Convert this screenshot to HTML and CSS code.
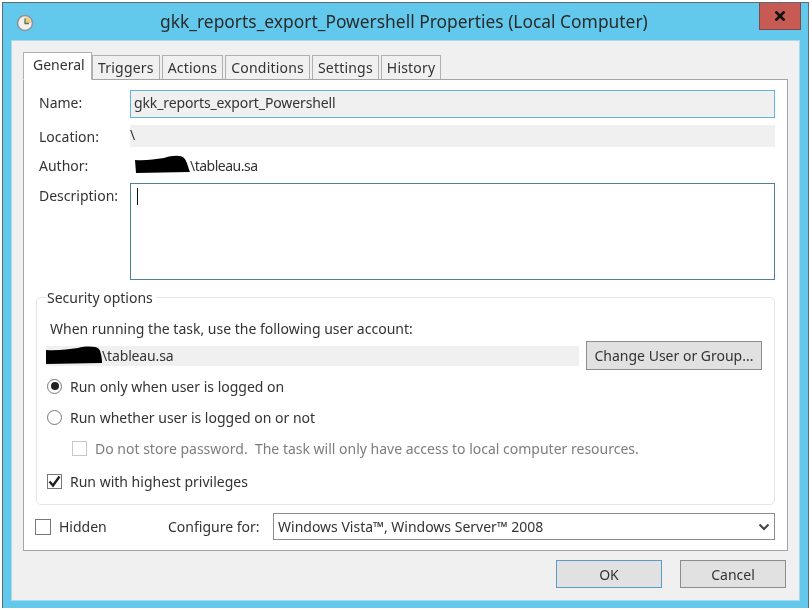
FILE: index.html
```html
<!DOCTYPE html>
<html lang="en">
<head>
    <meta charset="UTF-8">
    <meta name="viewport" content="width=device-width, initial-scale=1.0">
    <title>gkk_reports_export_Powershell Properties (Local Computer)</title>
    <link rel="stylesheet" href="styles.css">
</head>
<body>
    <div class="window">
        <div class="titlebar">
            <svg class="clock" width="18" height="18" viewBox="0 0 18 18">
                <circle cx="9" cy="9" r="7.5" fill="#f2f0ea" stroke="#8d939a" stroke-width="1.6"/>
                <path d="M9 9V3A6 6 0 0 1 15 9Z" fill="#eccb7c"/>
                <path d="M9 4.5V9.5H13" fill="none" stroke="#6d6a5e" stroke-width="1.3"/>
            </svg>
            <div class="title">gkk_reports_export_Powershell Properties (Local Computer)</div>
            <button class="close">
                <svg width="12" height="10" viewBox="0 0 12 10"><path d="M1.5 0.5L10.5 9.5M10.5 0.5L1.5 9.5" stroke="#111" stroke-width="2.6"/></svg>
            </button>
        </div>
        <div class="content">
            <div class="tabs">
                <div class="tab active">General</div>
                <div class="tab">Triggers</div>
                <div class="tab">Actions</div>
                <div class="tab">Conditions</div>
                <div class="tab">Settings</div>
                <div class="tab">History</div>
            </div>
            <div class="panel">
                <div class="row row-name">
                    <label class="row-label">Name:</label>
                    <div class="name-input">gkk_reports_export_Powershell</div>
                </div>
                <div class="row row-location">
                    <label class="row-label">Location:</label>
                    <div class="readonly">\</div>
                </div>
                <div class="row row-author">
                    <label class="row-label">Author:</label>
                    <div class="author">
                        <svg class="blot" width="56" height="18" viewBox="0 0 56 18"><path d="M1 5C12 6 20 4 30 3C38 0 48 0 50 3C53 6 54 12 56 17L2 18Z" fill="#000"/></svg>\tableau.sa
                    </div>
                </div>
                <div class="row row-desc">
                    <label class="row-label">Description:</label>
                    <div class="desc"><span class="caret"></span></div>
                </div>
                <fieldset class="security">
                    <legend>Security options</legend>
                    <p class="account-note">When running the task, use the following user account:</p>
                    <div class="account-row">
                        <div class="account">
                            <svg class="blot" width="56" height="18" viewBox="0 0 56 18"><path d="M0 4C12 5 22 3 32 2C40 0 50 0 53 3C55 6 56 12 56 17L0 18Z" fill="#000"/></svg>\tableau.sa
                        </div>
                        <button class="btn btn-change">Change User or Group...</button>
                    </div>
                    <div class="option opt-first"><span class="radio checked"></span>Run only when user is logged on</div>
                    <div class="option opt-second"><span class="radio"></span>Run whether user is logged on or not</div>
                    <div class="option option-sub disabled"><span class="check"></span>Do not store password.&nbsp; The task will only have access to local computer resources.</div>
                    <div class="option opt-last">
                        <span class="check">
                            <svg width="13" height="13" viewBox="0 0 13 13"><path d="M1.5 6.5L5 10.5L11.5 1.5" fill="none" stroke="#222" stroke-width="2.4"/></svg>
                        </span>Run with highest privileges
                    </div>
                </fieldset>
                <div class="bottom-row">
                    <div class="hidden-opt"><span class="check"></span>Hidden</div>
                    <label class="config-label">Configure for:</label>
                    <div class="select">
                        <span>Windows Vista™, Windows Server™ 2008</span>
                        <svg width="12" height="8" viewBox="0 0 12 8"><path d="M1.5 1.5L6 6L10.5 1.5" fill="none" stroke="#444" stroke-width="2"/></svg>
                    </div>
                </div>
            </div>
            <div class="actions">
                <button class="btn btn-wide btn-default">OK</button>
                <button class="btn btn-wide">Cancel</button>
            </div>
        </div>
    </div>
</body>
</html>
```

FILE: styles.css
```css
* {
    box-sizing: border-box;
}
body {
    margin: 0;
    padding: 2px 3px 0 2px;
    background-color: #fff;
    font-family: "Noto Sans", sans-serif;
    font-size: 14px;
    color: #333;
}
/* the reference is a slightly soft, rescaled screenshot */
.window {
    position: relative;
    height: 606px;
    background: #63c9ec;
    border: 1px solid #5f6b72;
    border-bottom: none;
    padding: 0 8px 7px 8px;
    display: flex;
    flex-direction: column;
    filter: blur(0.35px);
}
.titlebar {
    height: 37px;
    flex: none;
    display: flex;
    align-items: center;
}
.clock {
    margin-left: 5px;
    margin-top: 3px;
}
.title {
    margin-left: 126px;
    margin-top: -2px;
    font-size: 17.4px;
    color: #2a2a2a;
}
.close {
    position: absolute;
    top: 0;
    right: 7px;
    width: 42px;
    height: 27px;
    padding: 0;
    background: #c75a52;
    border: 1px solid #7e4a48;
    border-top: none;
    display: flex;
    align-items: center;
    justify-content: center;
}
.content {
    flex: 1;
    background: #f0f0f0;
    border: 1px solid #a9d8ea;
    padding: 11px 11px 0 11px;
}
.tabs {
    display: flex;
    align-items: flex-end;
    gap: 2px;
    height: 28px;
    position: relative;
    z-index: 1;
}
.tab {
    height: 24px;
    padding: 0 5px;
    margin-bottom: 1px;
    line-height: 24px;
    background: #f0f0f0;
    border: 1px solid #aeb0b2;
    border-bottom: none;
    font-size: 14px;
    letter-spacing: 0.2px;
}
.tab.active {
    height: 28px;
    margin-bottom: 0;
    margin-right: -2px;
    width: 69px;
    padding: 0 9px;
    line-height: 24px;
    background: #fff;
    border-bottom: 1px solid #fff;
    letter-spacing: 0;
}
.panel {
    height: 472px;
    margin-top: -1px;
    background: #fff;
    border: 1px solid #a2a4a6;
    padding: 10px 12px 0 15px;
}
.row {
    display: flex;
}
.row-label {
    width: 91px;
    flex: none;
}
.row-name {
    align-items: center;
}
.row-name .row-label {
    padding-bottom: 3px;
}
.name-input {
    flex: 1;
    height: 28px;
    line-height: 24px;
    padding-left: 3px;
    letter-spacing: -0.12px;
    background: #f0f0f0;
    border: 1px solid #63b4dc;
}
.row-location {
    margin-top: 7px;
    height: 22px;
    align-items: center;
}
.readonly {
    flex: 1;
    height: 22px;
    line-height: 20px;
    background: #f0f0f0;
}
.row-author {
    margin-top: 8px;
    height: 20px;
    align-items: center;
}
.author {
    display: flex;
    align-items: center;
    margin-left: 4px;
    letter-spacing: -0.5px;
}
.blot {
    flex: none;
    margin-bottom: 2px;
}
.row-desc {
    margin-top: 8px;
}
.row-desc .row-label {
    padding-top: 3px;
}
.desc {
    flex: 1;
    height: 97px;
    border: 1px solid #4f7f9f;
    padding: 4px 6px;
}
.caret {
    display: block;
    width: 1px;
    height: 17px;
    background: #111;
}
.security {
    margin: 8px 0 0 -3px;
    padding: 0 12px 0 10px;
    height: 217px;
    border: 1px solid #dfe6ec;
    border-radius: 5px;
}
.security legend {
    padding: 0 3px 0 0;
}
.account-note {
    margin: 12px 0 0 3px;
    line-height: 20px;
}
.account-row {
    display: flex;
    align-items: center;
    justify-content: space-between;
    margin-top: 2px;
}
.account {
    display: flex;
    align-items: center;
    width: 533px;
    height: 20px;
    margin-left: -1px;
    letter-spacing: -0.15px;
    background: #f0f0f0;
}
.btn {
    font-family: inherit;
    font-size: 14px;
    color: #333;
    background: #e1e1e1;
    border: 1px solid #8c8c8c;
    padding: 0;
}
.btn-change {
    width: 176px;
    height: 29px;
}
.option {
    display: flex;
    align-items: center;
    height: 20px;
}
.opt-first {
    margin-top: 6px;
}
.opt-second {
    margin-top: 11px;
}
.option-sub {
    margin: 11px 0 0 25px;
}
.opt-last {
    margin-top: 13px;
}
.disabled {
    color: #7d7d7d;
}
.disabled .check {
    border-color: #c8c8c8;
}
.radio {
    flex: none;
    width: 15px;
    height: 15px;
    margin-right: 8px;
    border: 1px solid #777;
    border-radius: 50%;
    background: #fff;
    display: flex;
    align-items: center;
    justify-content: center;
}
.radio.checked::after {
    content: "";
    width: 8px;
    height: 8px;
    border-radius: 50%;
    background: #222;
}
.check {
    flex: none;
    width: 15px;
    height: 15px;
    margin-right: 8px;
    border: 1px solid #777;
    background: #fff;
    display: flex;
    align-items: center;
    justify-content: center;
}
.bottom-row {
    display: flex;
    align-items: center;
    height: 27px;
    margin: 8px 0 0 -4px;
}
.hidden-opt {
    display: flex;
    align-items: center;
    width: 133px;
}
.hidden-opt .check {
    width: 16px;
    height: 16px;
}
.config-label {
    width: 105px;
    flex: none;
}
.select {
    flex: 1;
    height: 27px;
    border: 1px solid #8c8c8c;
    padding: 0 4px;
    display: flex;
    align-items: center;
    justify-content: space-between;
}
.actions {
    display: flex;
    justify-content: flex-end;
    gap: 18px;
    margin-top: 9px;
    margin-right: 2px;
}
.btn-wide {
    width: 106px;
    height: 28px;
}
.btn-default {
    border-color: #5a9bc8;
}
```
